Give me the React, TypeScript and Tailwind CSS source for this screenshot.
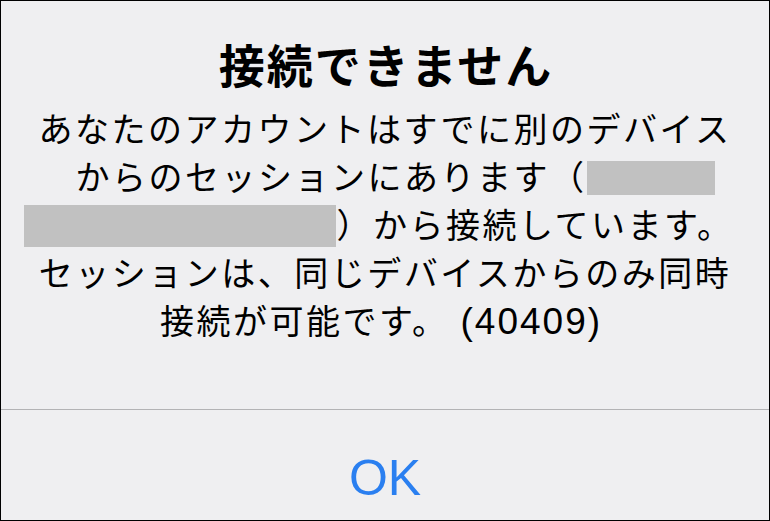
export default function App() {
  return (
    <div className="flex h-[521px] w-[770px] flex-col border border-black bg-[#efeff1] font-['Liberation_Sans','Noto_Sans_CJK_JP',sans-serif] text-black">
      <div className="flex h-[408px] flex-col items-center pt-[38px]">
        <h1 className="pl-[2px] text-[46px] font-bold leading-[56px] tracking-[2px]">接続できません</h1>
        <div className="mt-[11px] flex flex-col items-center text-[34px] leading-[48px] tracking-[2.5px]">
          <div>あなたのアカウントはすでに別のデバイス</div>
          <div className="flex items-center pl-[20px]">
            <span>からのセッションにあります（</span>
            <span className="h-[34px] w-[128px] bg-[#c1c1c1]" />
          </div>
          <div className="flex items-center pr-[12px]">
            <span className="h-[42px] w-[312px] bg-[#c1c1c1]" />
            <span>）から接続しています。</span>
          </div>
          <div>セッションは、同じデバイスからのみ同時</div>
          <div className="pr-[8px]">
            接続が可能です。 <span className="text-[37px] tracking-[2px]">(40409)</span>
          </div>
        </div>
      </div>
      <div className="h-px bg-[#b3b3b5]" />
      <button type="button" className="flex flex-1 items-center justify-center pt-[26px] text-[50px] leading-none text-[#2a7ff0]">
        OK
      </button>
    </div>
  );
}
